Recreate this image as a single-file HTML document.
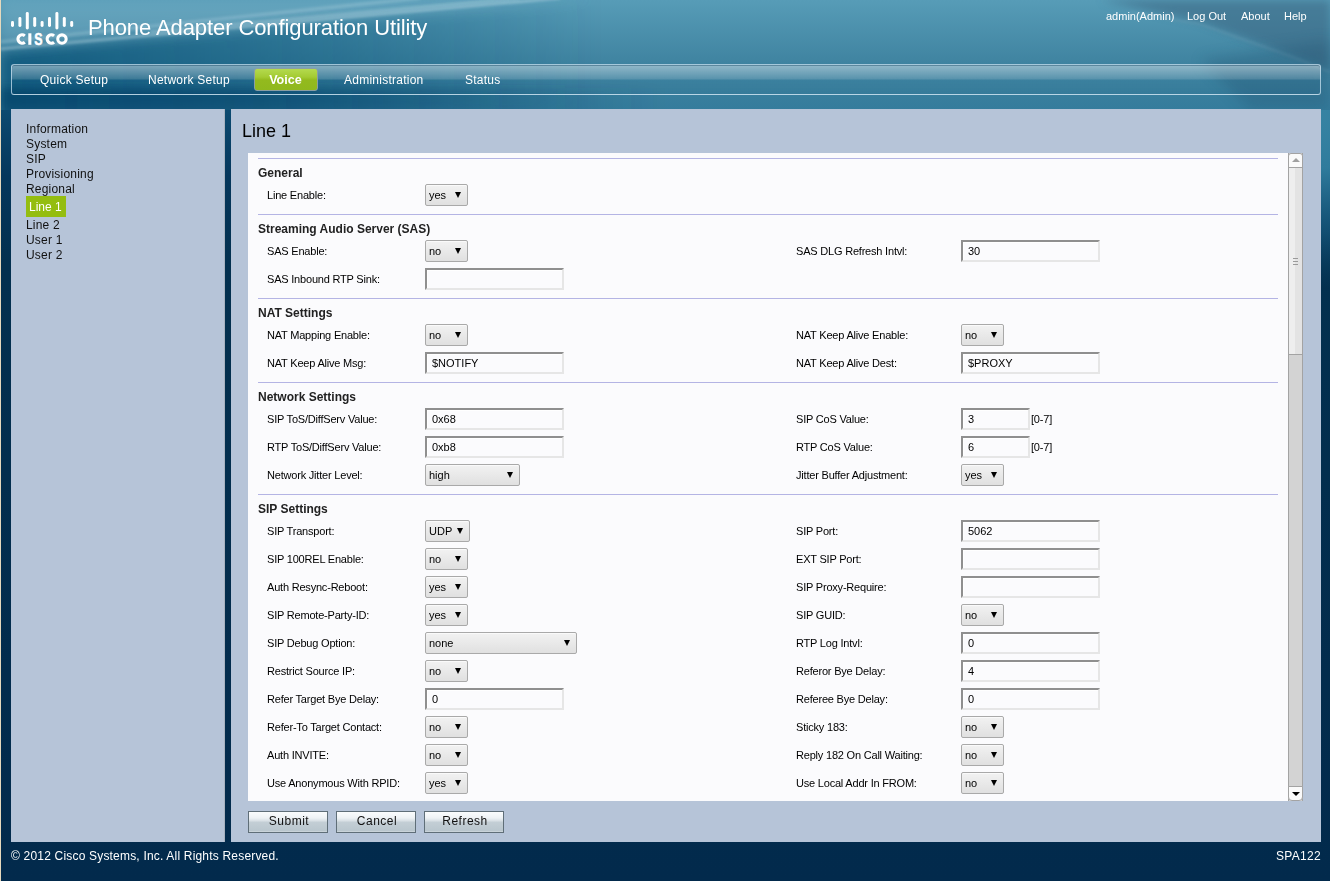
<!DOCTYPE html>
<html><head><meta charset="utf-8">
<style>
*{box-sizing:border-box}
html,body{margin:0;padding:0}
body{width:1330px;height:881px;position:relative;overflow:hidden;font-family:"Liberation Sans",sans-serif;
background:linear-gradient(180deg,#2c7598 0px,#2c7598 110px,#1a5e82 130px,#0b4368 200px,#05335a 300px,#032c50 450px,#022a4c 881px);}
.abs{position:absolute}
#scroll,.lbl,.lnav,.tab,.title,.toplinks,#h1,#foot,#spa,.btn,#l1,#voice{will-change:transform}
#lb{position:absolute;left:0;top:0;width:1px;height:881px;background:#e6d9bd}
.streak{position:absolute;left:0;top:0;width:1330px;height:110px;overflow:hidden}
.title{position:absolute;left:88px;top:15px;letter-spacing:-.09px;font-size:22px;color:#fff;white-space:nowrap}
.toplinks{position:absolute;top:10px;font-size:11px;color:#fff;white-space:nowrap}
#nav{position:absolute;left:11px;top:64px;width:1310px;height:31px;border:1px solid rgba(200,225,240,.75);border-radius:3px;
box-shadow:inset 0 1px 0 rgba(0,50,80,.35);background:linear-gradient(180deg,rgba(255,255,255,.42) 1px,rgba(255,255,255,.15) 14px,rgba(255,255,255,0) 15px,rgba(0,30,60,.03) 29px)}
.tab{position:absolute;top:73px;letter-spacing:.25px;font-size:12px;color:#fff;white-space:nowrap}
#voice{position:absolute;left:254px;top:68px;width:64px;height:23px;border:1px solid #8a9ea4;border-radius:3px;
background:linear-gradient(180deg,#b4da4e 0,#a4cb33 8px,#93ba1e 11px,#8fb81d 22px);color:#fff;font-weight:bold;font-size:12.6px;text-align:center;line-height:22px;padding-right:1px}
#leftp{position:absolute;left:11px;top:109px;width:214px;height:733px;background:#b6c4d8;border-right:1px solid #a7b2c0}
#rightp{position:absolute;left:231px;top:109px;width:1090px;height:733px;background:#b6c4d8}
.lnav{position:absolute;left:26px;letter-spacing:.2px;font-size:12px;color:#111;white-space:nowrap}
#l1{position:absolute;left:26px;top:196px;width:40px;height:21px;background:#94bd10;color:#fff;font-size:12px;padding-left:3px;line-height:23px;letter-spacing:0;overflow:hidden}
#h1{position:absolute;left:242px;top:121px;font-size:18px;color:#000;white-space:nowrap}
#scroll{position:absolute;left:248px;top:153px;width:1055px;height:648px;background:#fbfbfd;overflow:hidden}
#sb{position:absolute;left:1288px;top:153px;width:15px;height:648px}
.sep{position:absolute;left:10px;width:1020px;height:1px;background:#b4b4e4}
.hd{position:absolute;left:10px;font-size:12px;font-weight:bold;color:#222;white-space:nowrap}
.lbl{position:absolute;letter-spacing:-.2px;font-size:11px;color:#000;white-space:nowrap}
.sel{position:absolute;height:22px;border:1px solid #a9a9a9;border-radius:2px;box-shadow:inset 0 1px 0 #fafafa;background:linear-gradient(180deg,#f2f2f2,#e0e0e0);font-size:11px;color:#000;line-height:20px;padding-left:3px}
.sel:after{content:"";position:absolute;right:6px;top:7px;border-left:3px solid transparent;border-right:3px solid transparent;border-top:6px solid #000}
.inp{position:absolute;height:22px;border-style:solid;border-width:2px 1px 1px 2px;border-width:2px;border-color:#8f8f8f #e6e6e6 #e6e6e6 #8f8f8f;box-shadow:inset 1px 1px 0 #fff;background:#fbfbfd;font-size:11px;color:#000;line-height:18px;padding-left:5px}
.btn{position:absolute;top:811px;height:22px;width:80px;border:1px solid #5f6e78;box-shadow:inset 0 -1px 0 #c9d3d9;background:linear-gradient(180deg,#fafcfd 0,#eef2f5 30%,#dce3e8 42%,#c3ced5 52%,#b8c5cd 100%);font-size:12px;color:#111;text-align:center;line-height:19px;letter-spacing:.5px;padding-left:2px}
#foot{position:absolute;left:11px;top:849px;font-size:12px;color:#fff;white-space:nowrap;letter-spacing:.19px}
#spa{position:absolute;right:9px;top:849px;font-size:12px;color:#fff;white-space:nowrap;letter-spacing:.3px}
</style></head><body>
<svg class="abs" style="left:0;top:0" width="1330" height="881" viewBox="0 0 1330 881">
<defs>
<linearGradient id="bv" x1="0" y1="0" x2="0" y2="881" gradientUnits="userSpaceOnUse">
<stop offset="0" stop-color="#0c4a70"/><stop offset=".125" stop-color="#0c4a70"/><stop offset=".2" stop-color="#05375c"/><stop offset=".3" stop-color="#03304f"/><stop offset="1" stop-color="#022a4c"/>
</linearGradient>
<radialGradient id="glow" cx="1200" cy="110" r="900" gradientUnits="userSpaceOnUse" gradientTransform="translate(1200 110) scale(1 .2) translate(-1200 -110)">
<stop offset="0" stop-color="#3a87a6"/><stop offset=".35" stop-color="#2f7b9c"/><stop offset=".7" stop-color="#1a5f84" stop-opacity=".6"/><stop offset="1" stop-color="#0c4a70" stop-opacity="0"/>
</radialGradient>
</defs>
<rect width="1330" height="881" fill="url(#bv)"/>
<rect width="1330" height="881" fill="url(#glow)"/>
</svg>
<svg class="abs" style="left:0;top:0" width="1330" height="110" viewBox="0 0 1330 110">
<defs>
<linearGradient id="gb" x1="0" y1="0" x2="0" y2="1">
<stop offset="0" stop-color="#579cb7"/><stop offset=".58" stop-color="#3f83a0"/><stop offset="1" stop-color="#357c9c"/>
</linearGradient>
<linearGradient id="gl" x1="0" y1="0" x2="1" y2="0">
<stop offset="0" stop-color="#004c72" stop-opacity=".7"/><stop offset=".25" stop-color="#004c72" stop-opacity=".35"/><stop offset=".45" stop-color="#004c72" stop-opacity="0"/>
</linearGradient>
<linearGradient id="gr" x1="0" y1="0" x2="1" y2="0">
<stop offset="0" stop-color="#1e4a68" stop-opacity="0"/><stop offset="1" stop-color="#1e4a68" stop-opacity=".6"/>
</linearGradient>
<linearGradient id="gl2" x1="0" y1="0" x2="1" y2="0"><stop offset="0" stop-color="#003c64" stop-opacity=".6"/><stop offset=".2" stop-color="#003c64" stop-opacity=".5"/><stop offset=".5" stop-color="#003c64" stop-opacity="0"/></linearGradient>
<filter id="bl" x="-20%" y="-50%" width="140%" height="200%"><feGaussianBlur stdDeviation="7"/></filter>
<filter id="bl3" x="-20%" y="-50%" width="140%" height="200%"><feGaussianBlur stdDeviation="4"/></filter>
<filter id="bl2" x="-20%" y="-50%" width="140%" height="200%"><feGaussianBlur stdDeviation="1.5"/></filter>
</defs>
<rect width="1330" height="110" fill="url(#gb)"/>
<polygon points="0,50 560,0 1330,0 1330,110 0,110" fill="url(#gl)" filter="url(#bl)"/>
<rect x="0" y="88" width="1330" height="40" fill="url(#gl2)" filter="url(#bl3)"/>
<polygon points="0,0 600,0 0,48" fill="#b8dcea" opacity=".16" filter="url(#bl)"/>
<line x1="0" y1="49" x2="560" y2="-2" stroke="#e0f2f8" stroke-width="2" opacity=".5" filter="url(#bl2)"/><line x1="150" y1="32" x2="520" y2="-2" stroke="#e8f6fa" stroke-width="2.5" opacity=".35" filter="url(#bl2)"/>
<line x1="0" y1="42" x2="420" y2="-2" stroke="#e0f2f8" stroke-width="3" opacity=".25" filter="url(#bl2)"/>
<polygon points="1100,0 1330,0 1330,70 1290,55 1200,22" fill="#3a6581" opacity=".55" filter="url(#bl3)"/><polyline points="1130,12 1200,24 1290,56 1330,72" fill="none" stroke="#8fb6c8" stroke-width="1.5" opacity=".3" filter="url(#bl2)"/>
<polygon points="1200,60 1330,40 1330,110 1250,110" fill="#1e4a68" opacity=".25" filter="url(#bl)"/>
</svg>
<svg class="abs" style="left:10px;top:11px" width="66" height="36" viewBox="0 0 66 36">
<g fill="#fff">
<rect x="1" y="10" width="3" height="6" rx="1.4"/>
<rect x="8.4" y="6" width="3" height="10" rx="1.4"/>
<rect x="15.8" y="1" width="3" height="17.5" rx="1.4"/>
<rect x="23.2" y="6" width="3" height="10" rx="1.4"/>
<rect x="30.6" y="10" width="3" height="6" rx="1.4"/>
<rect x="38" y="6" width="3" height="10" rx="1.4"/>
<rect x="45.4" y="1" width="3" height="17.5" rx="1.4"/>
<rect x="52.8" y="6" width="3" height="10" rx="1.4"/>
<rect x="60.2" y="10" width="3" height="6" rx="1.4"/>
<path d="M14.85,24.83 A4.2,4.2 0 1 0 14.85,31.27" fill="none" stroke="#fff" stroke-width="3.1"/>
<rect x="18.3" y="22.3" width="3.1" height="11.5"/>
<text transform="translate(24.2,33.6) scale(.8,1)" x="0" y="0" font-family="Liberation Sans" font-weight="bold" font-size="15.6" stroke="#fff" stroke-width=".5">S</text>
<path d="M44.05,24.83 A4.2,4.2 0 1 0 44.05,31.27" fill="none" stroke="#fff" stroke-width="3.1"/>
<circle cx="51.95" cy="28.05" r="4.2" fill="none" stroke="#fff" stroke-width="3.1"/>
</g>
</svg>
<div id="lb"></div>
<div class="title">Phone Adapter Configuration Utility</div>
<div class="toplinks" style="left:1106px">admin(Admin)</div>
<div class="toplinks" style="left:1187px">Log Out</div>
<div class="toplinks" style="left:1241px">About</div>
<div class="toplinks" style="left:1284px">Help</div>

<div id="nav"></div>
<div class="tab" style="left:40px">Quick Setup</div>
<div class="tab" style="left:148px">Network Setup</div>
<div id="voice">Voice</div>
<div class="tab" style="left:344px">Administration</div>
<div class="tab" style="left:465px">Status</div>

<div id="leftp"></div>
<div id="rightp"></div>
<div class="lnav" style="top:122px">Information</div>
<div class="lnav" style="top:137px">System</div>
<div class="lnav" style="top:152px">SIP</div>
<div class="lnav" style="top:167px">Provisioning</div>
<div class="lnav" style="top:182px">Regional</div>
<div id="l1">Line 1</div>
<div class="lnav" style="top:218px">Line 2</div>
<div class="lnav" style="top:233px">User 1</div>
<div class="lnav" style="top:248px">User 2</div>

<div id="h1">Line 1</div>

<div id="scroll">
<div class="sep" style="top:5px"></div>
<div class="hd" style="top:13px">General</div>
<div class="lbl" style="left:19px;top:36px">Line Enable:</div>
<div class="sel" style="left:177px;top:31px;width:43px">yes</div>
<div class="sep" style="top:61px"></div>
<div class="hd" style="top:69px">Streaming Audio Server (SAS)</div>
<div class="lbl" style="left:19px;top:92px">SAS Enable:</div>
<div class="sel" style="left:177px;top:87px;width:43px">no</div>
<div class="lbl" style="left:548px;top:92px">SAS DLG Refresh Intvl:</div>
<div class="inp" style="left:713px;top:87px;width:139px">30</div>
<div class="lbl" style="left:19px;top:120px">SAS Inbound RTP Sink:</div>
<div class="inp" style="left:177px;top:115px;width:139px"></div>
<div class="sep" style="top:145px"></div>
<div class="hd" style="top:153px">NAT Settings</div>
<div class="lbl" style="left:19px;top:176px">NAT Mapping Enable:</div>
<div class="sel" style="left:177px;top:171px;width:43px">no</div>
<div class="lbl" style="left:548px;top:176px">NAT Keep Alive Enable:</div>
<div class="sel" style="left:713px;top:171px;width:43px">no</div>
<div class="lbl" style="left:19px;top:204px">NAT Keep Alive Msg:</div>
<div class="inp" style="left:177px;top:199px;width:139px">$NOTIFY</div>
<div class="lbl" style="left:548px;top:204px">NAT Keep Alive Dest:</div>
<div class="inp" style="left:713px;top:199px;width:139px">$PROXY</div>
<div class="sep" style="top:229px"></div>
<div class="hd" style="top:237px">Network Settings</div>
<div class="lbl" style="left:19px;top:260px">SIP ToS/DiffServ Value:</div>
<div class="inp" style="left:177px;top:255px;width:139px">0x68</div>
<div class="lbl" style="left:548px;top:260px">SIP CoS Value:</div>
<div class="inp" style="left:713px;top:255px;width:69px">3</div>
<div class="lbl" style="left:783px;top:260px">[0-7]</div>
<div class="lbl" style="left:19px;top:288px">RTP ToS/DiffServ Value:</div>
<div class="inp" style="left:177px;top:283px;width:139px">0xb8</div>
<div class="lbl" style="left:548px;top:288px">RTP CoS Value:</div>
<div class="inp" style="left:713px;top:283px;width:69px">6</div>
<div class="lbl" style="left:783px;top:288px">[0-7]</div>
<div class="lbl" style="left:19px;top:316px">Network Jitter Level:</div>
<div class="sel" style="left:177px;top:311px;width:95px">high</div>
<div class="lbl" style="left:548px;top:316px">Jitter Buffer Adjustment:</div>
<div class="sel" style="left:713px;top:311px;width:43px">yes</div>
<div class="sep" style="top:341px"></div>
<div class="hd" style="top:349px">SIP Settings</div>
<div class="lbl" style="left:19px;top:372px">SIP Transport:</div>
<div class="sel" style="left:177px;top:367px;width:45px">UDP</div>
<div class="lbl" style="left:548px;top:372px">SIP Port:</div>
<div class="inp" style="left:713px;top:367px;width:139px">5062</div>
<div class="lbl" style="left:19px;top:400px">SIP 100REL Enable:</div>
<div class="sel" style="left:177px;top:395px;width:43px">no</div>
<div class="lbl" style="left:548px;top:400px">EXT SIP Port:</div>
<div class="inp" style="left:713px;top:395px;width:139px"></div>
<div class="lbl" style="left:19px;top:428px">Auth Resync-Reboot:</div>
<div class="sel" style="left:177px;top:423px;width:43px">yes</div>
<div class="lbl" style="left:548px;top:428px">SIP Proxy-Require:</div>
<div class="inp" style="left:713px;top:423px;width:139px"></div>
<div class="lbl" style="left:19px;top:456px">SIP Remote-Party-ID:</div>
<div class="sel" style="left:177px;top:451px;width:43px">yes</div>
<div class="lbl" style="left:548px;top:456px">SIP GUID:</div>
<div class="sel" style="left:713px;top:451px;width:43px">no</div>
<div class="lbl" style="left:19px;top:484px">SIP Debug Option:</div>
<div class="sel" style="left:177px;top:479px;width:152px">none</div>
<div class="lbl" style="left:548px;top:484px">RTP Log Intvl:</div>
<div class="inp" style="left:713px;top:479px;width:139px">0</div>
<div class="lbl" style="left:19px;top:512px">Restrict Source IP:</div>
<div class="sel" style="left:177px;top:507px;width:43px">no</div>
<div class="lbl" style="left:548px;top:512px">Referor Bye Delay:</div>
<div class="inp" style="left:713px;top:507px;width:139px">4</div>
<div class="lbl" style="left:19px;top:540px">Refer Target Bye Delay:</div>
<div class="inp" style="left:177px;top:535px;width:139px">0</div>
<div class="lbl" style="left:548px;top:540px">Referee Bye Delay:</div>
<div class="inp" style="left:713px;top:535px;width:139px">0</div>
<div class="lbl" style="left:19px;top:568px">Refer-To Target Contact:</div>
<div class="sel" style="left:177px;top:563px;width:43px">no</div>
<div class="lbl" style="left:548px;top:568px">Sticky 183:</div>
<div class="sel" style="left:713px;top:563px;width:43px">no</div>
<div class="lbl" style="left:19px;top:596px">Auth INVITE:</div>
<div class="sel" style="left:177px;top:591px;width:43px">no</div>
<div class="lbl" style="left:548px;top:596px">Reply 182 On Call Waiting:</div>
<div class="sel" style="left:713px;top:591px;width:43px">no</div>
<div class="lbl" style="left:19px;top:624px">Use Anonymous With RPID:</div>
<div class="sel" style="left:177px;top:619px;width:43px">yes</div>
<div class="lbl" style="left:548px;top:624px">Use Local Addr In FROM:</div>
<div class="sel" style="left:713px;top:619px;width:43px">no</div>
</div>
<div id="sb">
<div style="position:absolute;left:0;top:0;width:15px;height:648px;background:#d3d3d3;border-left:1px solid #a3a3a3;border-right:1px solid #a3a3a3"></div>
<div style="position:absolute;left:0;top:0;width:15px;height:15px;background:#fafafa;border:1px solid #a3a3a3;border-radius:3px 3px 0 0"></div>
<div style="position:absolute;left:4px;top:5px;width:0;height:0;border-left:4px solid transparent;border-right:4px solid transparent;border-bottom:4px solid #a0a0a0"></div>
<div style="position:absolute;left:0;top:14px;width:15px;height:188px;border:1px solid #a3a3a3;background:linear-gradient(90deg,#eeeeee 0,#eeeeee 50%,#e3e3e3 50%,#e3e3e3 100%)"></div>
<div style="position:absolute;left:5px;top:105px;width:5px;height:1px;background:#9a9a9a;box-shadow:0 3px 0 #9a9a9a,0 6px 0 #9a9a9a"></div>
<div style="position:absolute;left:0;top:633px;width:15px;height:15px;background:#fafafa;border:1px solid #a3a3a3;border-radius:0 0 4px 4px"></div>
<div style="position:absolute;left:4px;top:639px;width:0;height:0;border-left:4px solid transparent;border-right:4px solid transparent;border-top:4px solid #000"></div>
</div>

<div class="btn" style="left:248px">Submit</div>
<div class="btn" style="left:336px">Cancel</div>
<div class="btn" style="left:424px">Refresh</div>

<div id="foot">© 2012 Cisco Systems, Inc. All Rights Reserved.</div>
<div id="spa">SPA122</div>
</body></html>
